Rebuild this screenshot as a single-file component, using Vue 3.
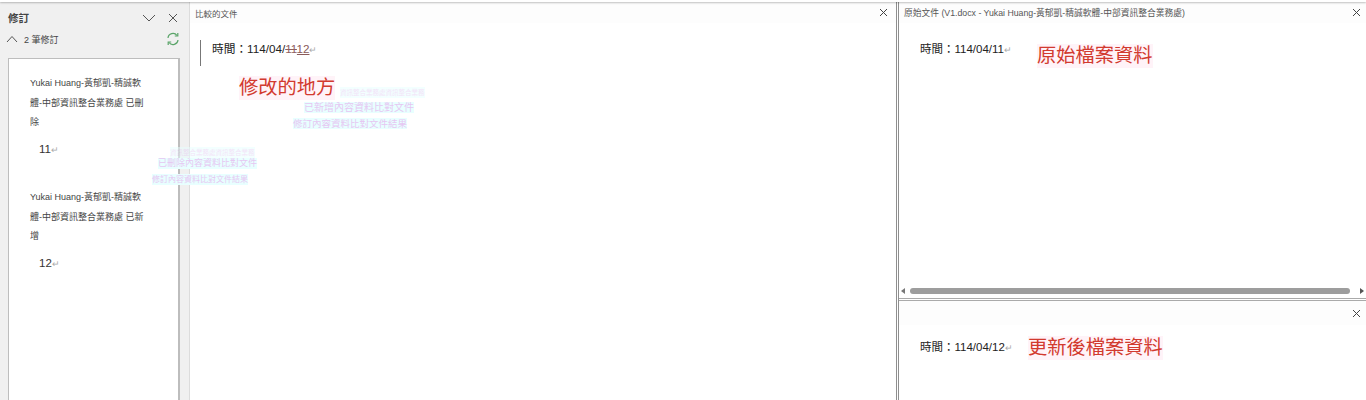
<script setup>
const revisions = [
  { who: 'Yukai Huang-黃郁凱-精誠軟體-中部資訊整合業務處 已刪除', value: '11' },
  { who: 'Yukai Huang-黃郁凱-精誠軟體-中部資訊整合業務處 已新增', value: '12' },
];
</script>

<template>
  <div class="app">
    <div class="top-strip"></div>
    <div class="body">
      <aside class="side">
        <div class="side-head">
          <span class="side-title">修訂</span>
          <div class="side-icons">
            <svg width="14" height="14" viewBox="0 0 14 14"><path d="M1 4l6 6 6-6" fill="none" stroke="#555" stroke-width="1"/></svg>
            <svg width="12" height="12" viewBox="0 0 12 12"><path d="M2 2l8 8M10 2l-8 8" fill="none" stroke="#555" stroke-width="1"/></svg>
          </div>
        </div>
        <div class="side-count">
          <svg width="12" height="8" viewBox="0 0 12 8"><path d="M1 7l5-5.500L11 7" fill="none" stroke="#555" stroke-width="1"/></svg>
          <span>2 筆修訂</span>
          <svg class="refresh" width="14" height="14" viewBox="0 0 14 14">
            <path d="M2 6a5 5 0 0 1 9-2.500M12 8a5 5 0 0 1-9 2.500" fill="none" stroke="#5aa469" stroke-width="1.200"/>
            <path d="M11.800 1v3h-3M2.200 13v-3h3" fill="none" stroke="#5aa469" stroke-width="1.200"/>
          </svg>
        </div>
        <div class="card">
          <div v-for="r in revisions" :key="r.value" class="rev">
            <p class="who">{{ r.who }}</p>
            <p class="val">{{ r.value }}<span class="mark">↵</span></p>
          </div>
        </div>
      </aside>

      <section class="center">
        <header class="pane-head">
          <span>比較的文件</span>
          <svg class="x" width="9" height="9" viewBox="0 0 9 9"><path d="M1 1l7 7M8 1l-7 7" fill="none" stroke="#444" stroke-width="1"/></svg>
        </header>
        <div class="doc-line">
          <p class="doc-text big">時間：114/04/<span class="del">11</span><span class="ins">12</span><span class="mark">↵</span></p>
        </div>
        <span class="note note-center">修改的地方</span>
        <span class="ghost g1">資訊整合業務處資訊整合業務</span>
        <span class="ghost g2">已新增內容資料比對文件</span>
        <span class="ghost g3">修訂內容資料比對文件結果</span>
      </section>

      <section class="right">
        <div class="right-top">
          <header class="pane-head tight">
            <span>原始文件 (V1.docx - Yukai Huang-黃郁凱-精誠軟體-中部資訊整合業務處)</span>
            <svg class="x" width="9" height="9" viewBox="0 0 9 9"><path d="M1 1l7 7M8 1l-7 7" fill="none" stroke="#444" stroke-width="1"/></svg>
          </header>
          <div class="right-doc">
            <p class="doc-text">時間：114/04/11<span class="mark">↵</span></p>
            <span class="note note-orig">原始檔案資料</span>
          </div>
          <div class="scrollbar">
            <i class="arrow arrow-left"></i>
            <div class="thumb"></div>
            <i class="arrow arrow-right"></i>
          </div>
        </div>
        <div class="right-bottom">
          <header class="pane-head tight bottom-head">
            <svg class="x" width="9" height="9" viewBox="0 0 9 9"><path d="M1 1l7 7M8 1l-7 7" fill="none" stroke="#444" stroke-width="1"/></svg>
          </header>
          <div class="right-doc lower">
            <p class="doc-text">時間：114/04/12<span class="mark">↵</span></p>
            <span class="note note-new">更新後檔案資料</span>
          </div>
        </div>
      </section>
    </div>
    <span class="ghost g4">資訊整合業務處資訊整合業務</span>
    <span class="ghost g5">已刪除內容資料比對文件</span>
    <span class="ghost g6">修訂內容資料比對文件結果</span>
  </div>
</template>

<style scoped>
.app {
  position: relative;
  width: 1366px;
  height: 400px;
  overflow: hidden;
  background: #fff;
  font-family: "Liberation Sans", "Noto Sans CJK TC", sans-serif;
  color: #333;
}
.top-strip {
  height: 2px;
  background: #fff;
  box-shadow: 0 1px 2px rgba(0, 0, 0, 0.25);
  position: relative;
  z-index: 2;
}
.body {
  display: flex;
  height: 398px;
}
.side {
  flex: none;
  width: 190px;
  box-sizing: border-box;
  background: #f0f0f0;
  border-right: 1px solid #dcdcdc;
  padding: 0 9px 0 8px;
}
.side-head {
  display: flex;
  align-items: center;
  justify-content: space-between;
  height: 31px;
}
.side-title {
  font-size: 10.500px;
  font-weight: 700;
  color: #444;
}
.side-icons {
  display: flex;
  align-items: center;
  gap: 11px;
  padding-right: 1px;
}
.side-count {
  display: flex;
  align-items: center;
  height: 12px;
  margin-left: -2px;
  font-size: 9px;
  color: #444;
}
.side-count span {
  margin-left: 6px;
}
.refresh {
  margin-left: auto;
}
.card {
  margin-top: 13px;
  height: 344px;
  box-sizing: border-box;
  background: #fff;
  border: 1px solid #bdbdbd;
  border-right-width: 2px;
  padding: 15px 34px 0 21px;
}
.rev {
  height: 114px;
}
.who {
  margin: 0;
  font-size: 9px;
  line-height: 19.500px;
  color: #444;
}
.val {
  margin: 7px 0 0 9px;
  font-size: 11.500px;
  line-height: 18px;
  color: #333;
}
.mark {
  color: #aaa;
  font-size: 9px;
}
.center {
  position: relative;
  width: 706px;
  flex: none;
  border-right: 1px solid #8f8f8f;
}
.pane-head {
  display: flex;
  align-items: center;
  justify-content: space-between;
  height: 21px;
  padding: 0 8px 0 5px;
  font-size: 8.500px;
  color: #555;
  background: #fdfdfd;
}
.pane-head.tight {
  padding-right: 5px;
  font-size: 8.750px;
}
.x {
  flex: none;
}
.doc-line {
  margin: 17px 0 0 10px;
  height: 26px;
  border-left: 1px solid #777;
  padding-left: 11px;
}
.doc-text {
  margin: 0;
  font-size: 11.500px;
  line-height: 18px;
  color: #222;
  white-space: nowrap;
}
.big {
  font-size: 11.700px;
}
.del {
  color: #8f5f5f;
  text-decoration: line-through;
}
.ins {
  color: #8a5a5a;
  text-decoration: underline;
}
.note {
  position: absolute;
  color: #d23a2f;
  white-space: nowrap;
  font-size: 19.250px;
  line-height: 24px;
  background: #fff3f8;
}
.note-center {
  left: 49px;
  top: 74px;
}
.ghost {
  position: absolute;
  font-size: 10px;
  line-height: 11px;
  white-space: nowrap;
  color: #e6c7f2;
  background: #e8ffff;
}
.g1 { left: 150px; top: 85px; opacity: 0.500; font-size: 6.500px; }
.g2 { left: 114px; top: 100px; }
.g3 { left: 103px; top: 116px; font-size: 9.500px; }
.g4 { left: 170px; top: 147px; opacity: 0.500; font-size: 6.500px; }
.g5 { left: 158px; top: 158px; font-size: 9px; }
.g6 { left: 152px; top: 174px; font-size: 8px; }
.right {
  flex: 1;
  display: flex;
  flex-direction: column;
  border-left: 1px solid #8f8f8f;
  margin-left: 1px;
}
.right-top {
  height: 296px;
  display: flex;
  flex-direction: column;
  border-bottom: 1px solid #aaa;
}
.right-doc {
  position: relative;
  flex: 1;
  padding: 17px 0 0 21px;
}
.note-orig {
  left: 138px;
  top: 21px;
}
.scrollbar {
  display: flex;
  align-items: center;
  height: 12px;
  padding: 0 2px;
  margin-bottom: 1px;
  gap: 5px;
}
.thumb {
  flex: 1;
  height: 6px;
  border-radius: 3px;
  background: #9d9d9d;
}
.arrow {
  width: 0;
  height: 0;
  border-top: 3px solid transparent;
  border-bottom: 3px solid transparent;
}
.arrow-left {
  border-right: 4px solid #777;
}
.arrow-right {
  border-left: 4px solid #555;
  margin-left: 5px;
}
.right-bottom {
  flex: 1;
  border-top: 1px solid #aaa;
  margin-top: 1px;
}
.bottom-head {
  justify-content: flex-end;
  height: 24px;
}
.lower {
  padding-top: 13px;
}
.note-new {
  left: 129px;
  top: 11px;
}
</style>
